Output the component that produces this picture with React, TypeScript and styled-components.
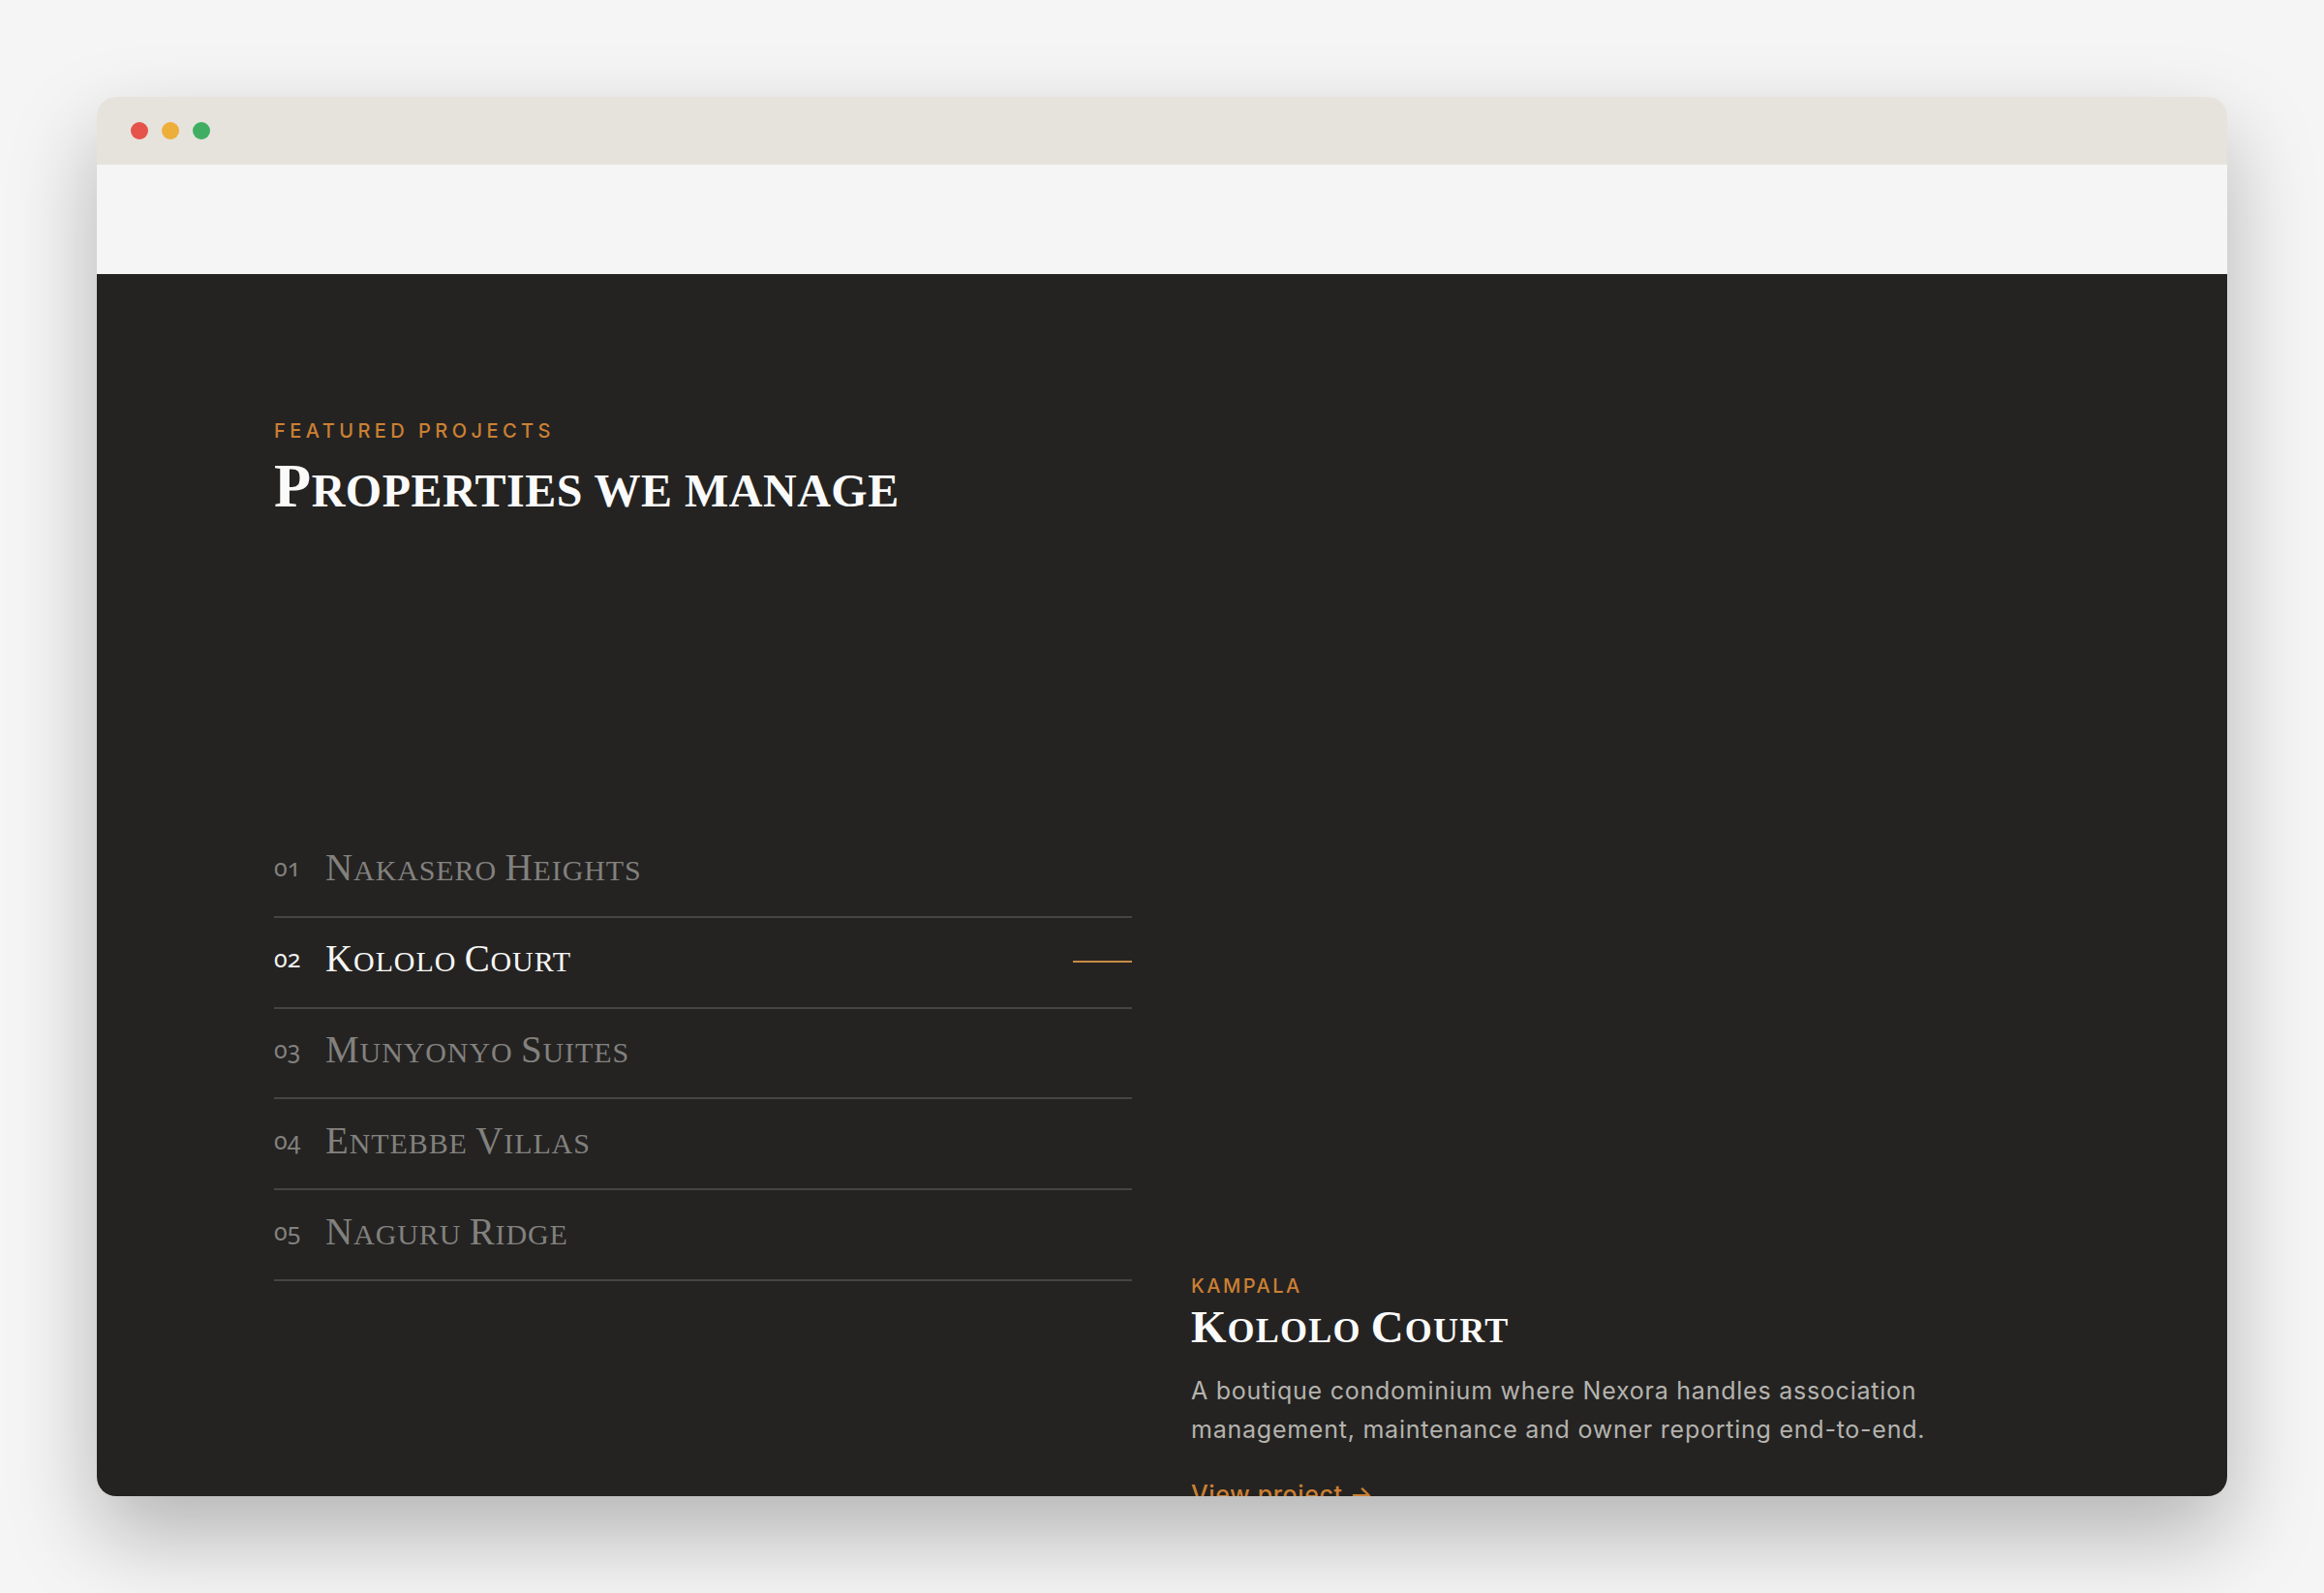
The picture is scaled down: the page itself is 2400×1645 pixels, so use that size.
import React from "react";
import styled, { createGlobalStyle } from "styled-components";

const Global = createGlobalStyle`
  html, body { margin: 0; padding: 0; background: #f5f5f5; }
  * { box-sizing: border-box; }
`;
const Page = styled.div`
  width: 2400px; height: 1645px; padding: 100px; overflow: hidden; background: #f5f5f5;
`;
const Frame = styled.div`
  height: 1445px; border-radius: 20px; overflow: hidden; display: flex; flex-direction: column;
  box-shadow: 0 40px 90px rgba(0,0,0,.27);
  background: #f5f5f5;
`;
const TitleBar = styled.div`
  height: 70px; flex: none; background: #e6e3dd; display: flex; align-items: center; gap: 14px; padding-left: 35px;
`;
const Dot = styled.span<{ $color: string }>`
  width: 18px; height: 18px; border-radius: 50%; background: ${p => p.$color};
`;
const Blank = styled.div`height: 113px; flex: none; background: #f5f5f5;`;
const Section = styled.section`
  flex: 1; min-height: 0; overflow: hidden; background: #242322; padding: 148px 183px 0;
`;
const Eyebrow = styled.div`
  font: 500 20px/28px "Inter", sans-serif; letter-spacing: 4.45px; color: #cc8033; text-transform: uppercase;
`;
const Cap = styled.span`font-size: 1.3em;`;
const Title = styled.h2`
  margin: 7px 0 0; font: 700 48px/72px "Liberation Serif", serif; text-transform: uppercase; color: #fafafa; letter-spacing: .5px;
`;
const Grid = styled.div`
  display: grid; grid-template-columns: 886px 1fr; column-gap: 61px; margin-top: 311px;
`;
const List = styled.ul`margin: 0; padding: 0; list-style: none;`;
const Row = styled.li`
  height: 93.8px; display: flex; align-items: center; border-bottom: 2px solid #464543; padding-bottom: 8px;
`;
const Num = styled.span<{ $active?: boolean }>`
  width: 53px; flex: none; font: 400 25px/1 "Noto Sans", sans-serif; font-variant-numeric: oldstyle-nums;
  color: ${p => p.$active ? "#f2f2f0" : "#82817e"};
`;
const Name = styled.span<{ $active?: boolean }>`
  flex: 1; font: 400 30px/1 "Liberation Serif", serif; text-transform: uppercase; letter-spacing: .9px;
  color: ${p => p.$active ? "#f7f7f5" : "#82817e"};
`;
const Dash = styled.span`width: 61px; height: 2px; margin-top: 6px; background: #c98a45;`;
const Detail = styled.div`padding-top: 461px;`;
const Place = styled.div`
  font: 500 20px/26px "Inter", sans-serif; letter-spacing: 2.5px; color: #cc8033; text-transform: uppercase;
`;
const DetailTitle = styled.h3`
  margin: 0; font: 700 36px/58px "Liberation Serif", serif; text-transform: uppercase; letter-spacing: 1.2px; color: #fafafa;
`;
const Body = styled.p`
  margin: 13px 0 0; width: 790px; font: 400 25px/40px "Inter", sans-serif; letter-spacing: .76px; color: #b5b3ae;
`;
const Link = styled.a`
  display: block; margin-top: 27px; font: 500 25px/40px "Inter", sans-serif; letter-spacing: .6px; color: #cc8033;
`;

const Caps = ({ text }: { text: string }) => (
  <>
    {text.split(/([A-Z])/).map((part, i) => (i % 2 ? <Cap key={i}>{part}</Cap> : part))}
  </>
);

const projects = ["Nakasero Heights", "Kololo Court", "Munyonyo Suites", "Entebbe Villas", "Naguru Ridge"];

export default function App() {
  return (
    <Page>
      <Global />
      <Frame>
        <TitleBar>
          <Dot $color="#e5534b" />
          <Dot $color="#eeae3a" />
          <Dot $color="#3fae62" />
        </TitleBar>
        <Blank />
        <Section>
          <Eyebrow>Featured Projects</Eyebrow>
          <Title><Caps text="Properties we manage" /></Title>
          <Grid>
            <List>
              {projects.map((p, i) => (
                <Row key={p}>
                  <Num $active={i === 1}>0{i + 1}</Num>
                  <Name $active={i === 1}><Caps text={p} /></Name>
                  {i === 1 && <Dash />}
                </Row>
              ))}
            </List>
            <Detail>
              <Place>Kampala</Place>
              <DetailTitle><Caps text="Kololo Court" /></DetailTitle>
              <Body>A boutique condominium where Nexora handles association management, maintenance and owner reporting end-to-end.</Body>
              <Link>View project →</Link>
            </Detail>
          </Grid>
        </Section>
      </Frame>
    </Page>
  );
}
